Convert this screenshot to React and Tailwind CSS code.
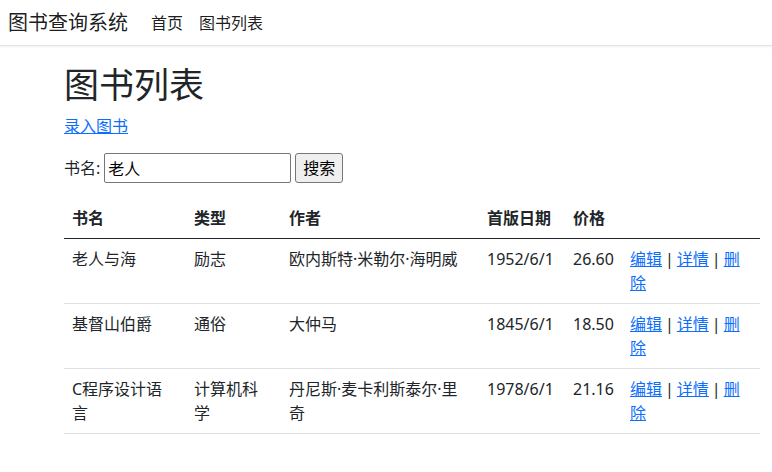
import React, { useState } from 'react';

const books = [
  { name: '老人与海', type: '励志', author: '欧内斯特·米勒尔·海明威', date: '1952/6/1', price: '26.60' },
  { name: '基督山伯爵', type: '通俗', author: '大仲马', date: '1845/6/1', price: '18.50' },
  { name: 'C程序设计语言', type: '计算机科学', author: '丹尼斯·麦卡利斯泰尔·里奇', date: '1978/6/1', price: '21.16' },
];

const App = () => {
  const [keyword, setKeyword] = useState('老人');

  return (
    <div className="min-h-[472px] bg-white text-[#212529] text-[16px] leading-6" style={{ fontFamily: '"Noto Sans", "Noto Sans CJK SC", sans-serif' }}>
      <nav className="h-[46px] flex items-center border-b border-[#dee2e6] shadow-[0_1px_3px_rgba(0,0,0,0.06)]">
        <a className="ml-2 text-[20px] text-black/90 leading-7">图书查询系统</a>
        <div className="flex ml-[23px] gap-4">
          <a className="text-black/90">首页</a>
          <a className="text-black/90">图书列表</a>
        </div>
      </nav>

      <main className="pl-[64px] pr-3">
        <h1 className="mt-[18px] mb-2 text-[35px] leading-[42px] font-normal">图书列表</h1>
        <p className="mb-[15px]">
          <a href="#" className="text-[#0d6efd] underline">录入图书</a>
        </p>

        <form className="flex items-center h-[30px]" onSubmit={e => e.preventDefault()}>
          <span className="mr-1">书名:</span>
          <input
            value={keyword}
            onChange={e => setKeyword(e.target.value)}
            className="w-[187px] h-[30px] px-[3px] border border-[#767676] rounded-[2px] text-black outline-none"
          />
          <button className="ml-1 w-[48px] h-[30px] bg-[#efefef] border border-[#767676] rounded-[3px] text-black">搜索</button>
        </form>

        <table className="mt-[15px] w-[696px] table-fixed border-collapse text-left">
          <colgroup>
            <col className="w-[122px]" />
            <col className="w-[95px]" />
            <col className="w-[198px]" />
            <col className="w-[86px]" />
            <col className="w-[57px]" />
            <col className="w-[138px]" />
          </colgroup>
          <thead>
            <tr className="border-b border-[#212529]">
              {['书名', '类型', '作者', '首版日期', '价格', ''].map((h, i) => (
                <th key={i} className="px-2 py-2 font-bold align-bottom">{h}</th>
              ))}
            </tr>
          </thead>
          <tbody>
            {books.map((b, i) => (
              <tr key={i} className="border-b border-[#dee2e6] align-top">
                <td className="pl-2 pr-[10px] py-2 h-[64px]">{b.name}</td>
                <td className="pl-2 pr-[10px] py-2">{b.type}</td>
                <td className="px-2 py-2">{b.author}</td>
                <td className="px-2 py-2">{b.date}</td>
                <td className="px-2 py-2">{b.price}</td>
                <td className="pl-2 pr-[14px] py-2">
                  <a href="#" className="text-[#0d6efd] underline">编辑</a>
                  <span className="mx-[3px]">|</span>
                  <a href="#" className="text-[#0d6efd] underline">详情</a>
                  <span className="mx-[3px]">|</span>
                  <a href="#" className="text-[#0d6efd] underline">删除</a>
                </td>
              </tr>
            ))}
          </tbody>
        </table>
      </main>
    </div>
  );
};

export default App;
